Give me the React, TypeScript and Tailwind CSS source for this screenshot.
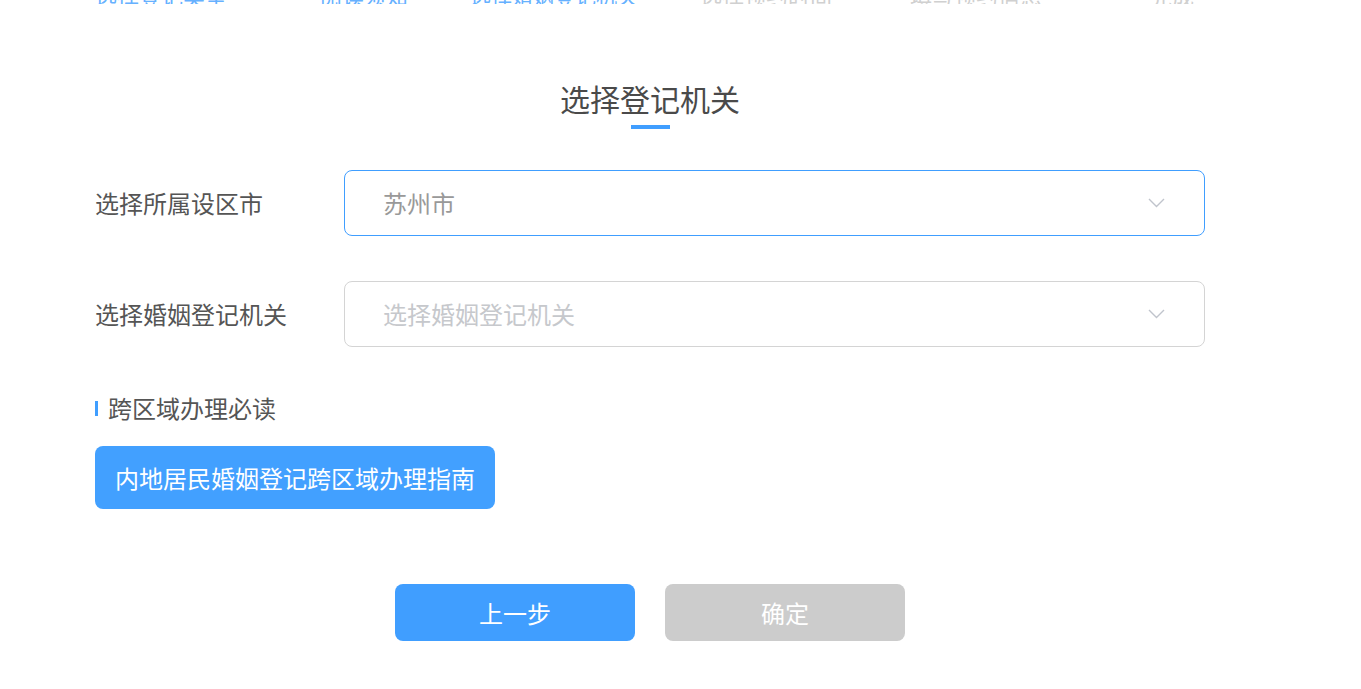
import React from "react";

const font = { fontFamily: '"Noto Sans CJK SC", "Noto Sans", sans-serif' };

function Chevron() {
  return (
    <svg width="17" height="10" viewBox="0 0 17 10" fill="none">
      <polyline points="1,1 8.5,8.5 16,1" stroke="#c0c4cc" strokeWidth="1.4" fill="none" />
    </svg>
  );
}

export default function App() {
  return (
    <div className="min-h-[689px] w-full bg-white" style={font}>
      <div className="flex h-[4px] items-end overflow-hidden text-[22px] leading-none">
        <span className="ml-[95px] w-[225px] shrink-0 translate-y-[2px] text-[#66b1ff]">选择登记类型</span>
        <span className="w-[150px] shrink-0 translate-y-[2px] text-[#66b1ff]">阅读须知</span>
        <span className="w-[230px] shrink-0 translate-y-[2px] text-[21px] text-[#66b1ff]">选择婚姻登记机关</span>
        <span className="w-[210px] shrink-0 translate-y-[2px] text-[#d0d0d0]">选择预约时间</span>
        <span className="w-[240px] shrink-0 translate-y-[2px] text-[#d0d0d0]">填写预约信息</span>
        <span className="shrink-0 translate-y-[2px] text-[#d0d0d0]">完成</span>
      </div>

      <div className="ml-[95px] w-[1110px]">
        <div className="mt-[79px] flex flex-col items-center">
          <div className="text-[30px] leading-none text-[#4a4a4a]">选择登记机关</div>
          <div className="mt-[12px] h-[4px] w-[39px] bg-[#409eff]" />
        </div>

        <div className="mt-[41px] flex items-center">
          <div className="w-[249px] shrink-0 text-[24px] leading-none text-[#555]">选择所属设区市</div>
          <div className="flex h-[66px] flex-1 items-center justify-between rounded-[8px] border border-[#409eff] pl-[38px] pr-[39px]">
            <span className="text-[24px] leading-none text-[#999]">苏州市</span>
            <Chevron />
          </div>
        </div>

        <div className="mt-[45px] flex items-center">
          <div className="w-[249px] shrink-0 text-[24px] leading-none text-[#555]">选择婚姻登记机关</div>
          <div className="flex h-[66px] flex-1 items-center justify-between rounded-[8px] border border-[#d4d4d4] pl-[38px] pr-[39px]">
            <span className="text-[24px] leading-none text-[#c6c8cc]">选择婚姻登记机关</span>
            <Chevron />
          </div>
        </div>

        <div className="mt-[49px] flex items-center">
          <div className="h-[15px] w-[3px] bg-[#409eff]" />
          <span className="ml-[10px] text-[24px] leading-none text-[#555]">跨区域办理必读</span>
        </div>

        <div className="mt-[26px] flex">
          <div className="flex h-[63px] items-center rounded-[8px] bg-[#42a0ff] px-[20px] text-[24px] leading-none text-white">
            内地居民婚姻登记跨区域办理指南
          </div>
        </div>

        <div className="mt-[75px] flex justify-center gap-[30px]">
          <div className="flex h-[57px] w-[240px] items-center justify-center rounded-[8px] bg-[#409eff] text-[24px] leading-none text-white">
            上一步
          </div>
          <div className="flex h-[57px] w-[240px] items-center justify-center rounded-[8px] bg-[#cccccc] text-[24px] leading-none text-white">
            确定
          </div>
        </div>
      </div>
    </div>
  );
}
